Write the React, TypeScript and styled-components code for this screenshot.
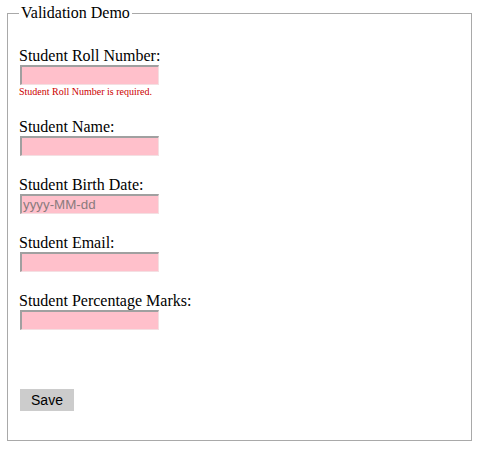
import styled, { createGlobalStyle } from "styled-components";

const GlobalStyle = createGlobalStyle`
  body {
    margin: 0;
    background: #ffffff;
    font-family: "Liberation Serif", "Times New Roman", serif;
    color: #000000;
  }
`;

const Page = styled.div`
  padding: 4px 0 0 7px;
`;

const StyledFieldset = styled.fieldset`
  box-sizing: border-box;
  width: 465px;
  height: 437px;
  margin: 0;
  padding: 0 11px;
  border: 1px solid #a9a9a9;
  display: flex;
  flex-direction: column;
`;

const StyledLegend = styled.legend`
  padding: 0 2px;
  margin-left: 0;
  font-size: 16px;
  line-height: 18px;
`;

const StyledForm = styled.form`
  display: flex;
  flex-direction: column;
  gap: 20px;
  padding-top: 25px;
`;

const StyledField = styled.div`
  display: flex;
  flex-direction: column;
  align-items: flex-start;
`;

const StyledLabel = styled.label`
  font-size: 16px;
  line-height: 18px;
`;

const StyledInput = styled.input`
  box-sizing: border-box;
  width: 139px;
  height: 20px;
  margin: 0 0 0 1px;
  padding: 0 1px;
  background: pink;
  border-style: solid;
  border-width: 2px 1px 1px 2px;
  border-color: #a0a0a0 #f4dfe2 #f4dfe2 #a0a0a0;
  font-family: "Liberation Sans", Arial, sans-serif;
  font-size: 13.33px;
  outline: none;

  &::placeholder {
    color: #8a7b7d;
  }
`;

const StyledError = styled.span`
  margin-top: 1px;
  font-size: 10px;
  line-height: 12px;
  color: #cc0000;
`;

const StyledButton = styled.button`
  align-self: flex-start;
  margin-top: 39px;
  margin-left: 1px;
  width: 54px;
  height: 22px;
  padding: 0;
  border: none;
  background: #cccccc;
  color: #000000;
  font-family: "Liberation Sans", Arial, sans-serif;
  font-size: 14px;
`;

type FieldProps = {
  label: string;
  placeholder?: string;
  error?: string;
};

const Field = ({ label, placeholder, error }: FieldProps) => (
  <StyledField>
    <StyledLabel>{label}</StyledLabel>
    <StyledInput type="text" placeholder={placeholder} />
    {error && <StyledError>{error}</StyledError>}
  </StyledField>
);

const App = () => {
  return (
    <Page>
      <GlobalStyle />
      <StyledFieldset>
        <StyledLegend>Validation Demo</StyledLegend>
        <StyledForm onSubmit={(e) => e.preventDefault()}>
          <Field label="Student Roll Number:" error="Student Roll Number is required." />
          <Field label="Student Name:" />
          <Field label="Student Birth Date:" placeholder="yyyy-MM-dd" />
          <Field label="Student Email:" />
          <Field label="Student Percentage Marks:" />
          <StyledButton type="submit">Save</StyledButton>
        </StyledForm>
      </StyledFieldset>
    </Page>
  );
};

export default App;
